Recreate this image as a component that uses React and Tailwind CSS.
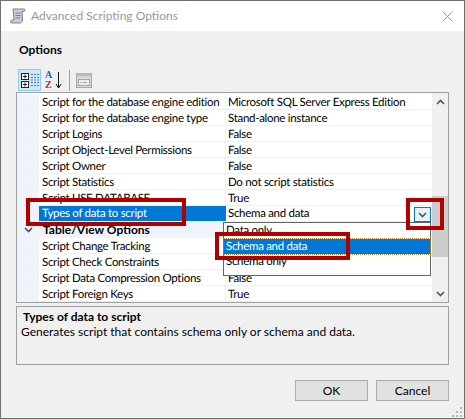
const rows = [
  ["Script for the database engine edition", "Microsoft SQL Server Express Edition"],
  ["Script for the database engine type", "Stand-alone instance"],
  ["Script Logins", "False"],
  ["Script Object-Level Permissions", "False"],
  ["Script Owner", "False"],
  ["Script Statistics", "Do not script statistics"],
  ["Script USE DATABASE", "True"],
];

const rows2 = [
  ["Script Change Tracking", "False"],
  ["Script Check Constraints", "True"],
  ["Script Data Compression Options", "False"],
  ["Script Foreign Keys", "True"],
];

function Row({ name, value }) {
  return (
    <div className="flex h-4 border-b border-[#f0f0f0] text-[11.5px] tracking-[-0.3px] [text-rendering:geometricPrecision]">
      <div className="w-[22px] shrink-0 bg-[#f0f4fa]" />
      <div className="w-[187px] shrink-0 pl-[3px] pt-[1px] leading-[16px] border-r border-[#f0f0f0] whitespace-nowrap">{name}</div>
      <div className="pl-[2px] pt-[1px] leading-[16px] whitespace-nowrap">{value}</div>
    </div>
  );
}

function Chevron({ up }) {
  return (
    <svg width="9" height="6" viewBox="0 0 9 6" className={up ? "rotate-180" : ""}>
      <path d="M1 1 L4.5 4.5 L8 1" fill="none" stroke="#555" strokeWidth="1.6" />
    </svg>
  );
}

function ScriptIcon() {
  return (
    <svg width="16" height="16" viewBox="0 0 16 16">
      <path d="M3 1 H14 C15 1 15.500 3 14 3.500 L12 3.500 L12.500 12 C12.500 14 11 15 10 15 H1.500 C0.500 15 0 13 1.500 12 H4 Z" fill="#c6ced8" stroke="#76828f" strokeWidth="1" />
      <path d="M5.500 5 H10.500 M5.500 7.500 H10.500 M5.500 10 H10.500" stroke="#76828f" strokeWidth="1" />
    </svg>
  );
}

function CategorizedIcon() {
  return (
    <svg width="20" height="17" viewBox="0 0 20 17">
      <rect x="1.500" y="1.500" width="7" height="6" fill="#fff" stroke="#222" />
      <rect x="1.500" y="9.500" width="7" height="6" fill="#fff" stroke="#222" />
      <path d="M3 4.500 H7 M5 2.500 V6.500 M3 12.500 H7 M5 10.500 V14.500" stroke="#222" />
      <path d="M11 2.500 H19 M11 5.500 H19 M11 8 H19 M11 10.500 H19 M11 13.500 H19" stroke="#667788" strokeDasharray="2 1" />
    </svg>
  );
}

function PagesIcon() {
  return (
    <svg width="16" height="15" viewBox="0 0 16 15">
      <rect x="0.500" y="0.500" width="15" height="14" fill="#dcdcdc" stroke="#a8a8a8" />
      <rect x="0.500" y="0.500" width="15" height="3" fill="#bdbdbd" />
      <rect x="2.500" y="6.500" width="11" height="6" fill="#ececec" stroke="#a8a8a8" />
      <path d="M4 9.500 H5 M6.500 9.500 H11" stroke="#a8a8a8" />
    </svg>
  );
}

export default function App() {
  return (
    <div className="relative w-[465px] h-[419px] overflow-hidden border border-[#707070] bg-[#f0f0f0] text-[12px] text-black" style={{ fontFamily: 'Lato, "Liberation Sans", Arial, sans-serif' }}>
      {/* Title bar */}
      <div className="flex h-[30px] items-center bg-white pl-[9px] pr-[9px]">
        <ScriptIcon />
        <span className="ml-[5px] text-[#999] text-[12px]">Advanced Scripting Options</span>
        <svg width="11" height="11" viewBox="0 0 11 11" className="ml-auto mr-[2px]">
          <path d="M0.500 0.500 L10.500 10.500 M10.500 0.500 L0.500 10.500" stroke="#999" />
        </svg>
      </div>

      <div className="px-[15px]">
        <div className="pl-[3px] pt-[12px] h-[37px] font-bold leading-[14px]">Options</div>

        {/* Toolbar */}
        <div className="flex h-[24px] items-center pl-[2px]">
          <div className="flex h-[22px] w-[23px] items-center justify-center border border-[#90c8f6] bg-[#cce8ff]">
            <CategorizedIcon />
          </div>
          <div className="ml-[4px] flex w-[17px] items-center">
            <div className="flex w-[9px] flex-col text-[10px] font-bold leading-[10px]" style={{ fontFamily: '"Liberation Serif", serif' }}>
              <span className="text-[#2b5fa8]">A</span>
              <span className="text-[#a83232]">Z</span>
            </div>
            <svg width="7" height="17" viewBox="0 0 7 17" className="ml-[1px]">
              <path d="M3.500 0 V15 M1 12 L3.500 16 L6 12" fill="none" stroke="#111" />
            </svg>
          </div>
          <div className="ml-[7px] h-[21px] w-px bg-[#a0a0a0]" />
          <div className="ml-[6px]"><PagesIcon /></div>
        </div>

        {/* Property grid */}
        <div className="flex h-[211px] w-[433px] border border-[#a0a0a0] bg-white">
          <div className="w-[415px] shrink-0 pt-[1px] overflow-hidden">
            {rows.map((r) => <Row key={r[0]} name={r[0]} value={r[1]} />)}
            <div className="flex h-4 border-b border-[#f0f0f0] text-[11.5px] tracking-[-0.3px] [text-rendering:geometricPrecision]">
              <div className="w-[22px] shrink-0 bg-[#f0f4fa]" />
              <div className="w-[187px] shrink-0 bg-[#0078d7] pl-[3px] leading-[15px] text-white">Types of data to script</div>
              <div className="pl-[2px] leading-[15px]">Schema and data</div>
            </div>
            <div className="flex h-4 items-center bg-[#f0f4fa] font-bold">
              <div className="flex w-[22px] shrink-0 justify-center pl-[1px]"><Chevron /></div>
              <div className="pl-[4px]">Table/View Options</div>
            </div>
            {rows2.map((r) => <Row key={r[0]} name={r[0]} value={r[1]} />)}
          </div>

          {/* Scrollbar */}
          <div className="flex w-[16px] flex-col bg-[#f0f0f0]">
            <div className="flex h-[17px] items-center justify-center"><Chevron up /></div>
            <div className="flex-1 pt-[86px]">
              <div className="h-[61px] bg-[#cdcdcd]" />
            </div>
            <div className="flex h-[17px] items-center justify-center"><Chevron /></div>
          </div>
        </div>

        {/* Description */}
        <div className="mt-[3px] h-[59px] w-[433px] border border-[#a0a0a0] pl-[4px] pt-[2px]">
          <div className="pl-[2px] font-bold leading-[15px]">Types of data to script</div>
          <div className="leading-[15px]">Generates script that contains schema only or schema and data.</div>
        </div>

        {/* Buttons */}
        <div className="mt-[15px] flex w-[433px] justify-end gap-2">
          <button className="h-[21px] w-[73px] border border-[#adadad] bg-[#e1e1e1]">OK</button>
          <button className="h-[21px] w-[73px] border border-[#adadad] bg-[#e1e1e1]">Cancel</button>
        </div>
      </div>

      {/* Dropdown button */}
      <div className="absolute left-[413px] top-[206px] flex h-[15px] w-[17px] items-center justify-center border border-[#0078d7] bg-[#e5f1fb]">
        <Chevron />
      </div>

      {/* Open dropdown list */}
      <div className="absolute left-[222px] top-[221px] h-[54px] w-[208px] border border-[#646464] bg-white text-[11.5px] tracking-[-0.3px] [text-rendering:geometricPrecision] leading-[15px]">
        <div className="h-[16px] pl-[2px]">Data only</div>
        <div className="h-[15px] bg-[#0078d7] pl-[2px] text-white outline-1 outline-dotted outline-[#c08030]">Schema and data</div>
        <div className="h-[15px] pl-[2px]">Schema only</div>
      </div>

      {/* Red callouts */}
      <div className="absolute left-[25px] top-[197px] h-[28px] w-[160px] border-[4px] border-[#b00000]" />
      <div className="absolute left-[405px] top-[197px] h-[32px] w-[38px] border-[4px] border-[#b00000]" />
      <div className="absolute left-[214px] top-[231px] h-[28px] w-[135px] border-[4px] border-[#b00000]" />

      {/* Resize grip */}
      <svg width="11" height="11" viewBox="0 0 11 11" className="absolute bottom-[1px] right-[1px]">
        <path d="M8 1 H10 V3 H8 Z M4 5 H6 V7 H4 Z M8 5 H10 V7 H8 Z M0 9 H2 V11 H0 Z M4 9 H6 V11 H4 Z M8 9 H10 V11 H8 Z" fill="#b8b8b8" />
      </svg>
    </div>
  );
}
